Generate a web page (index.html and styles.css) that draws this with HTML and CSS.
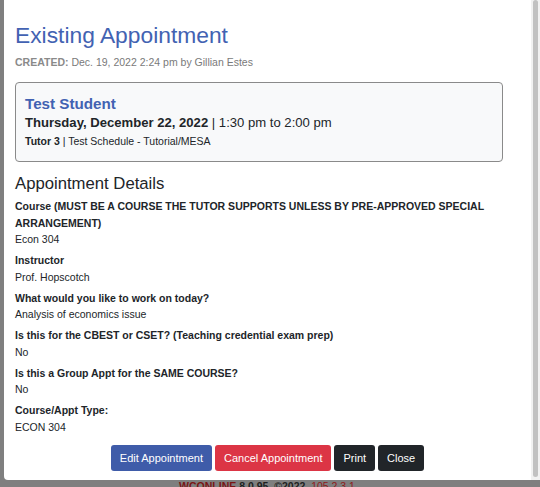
FILE: index.html
```html
<!DOCTYPE html>
<html>
  <head>
    <meta charset="utf-8">
    <title>Existing Appointment</title>
    <link rel="stylesheet" href="styles.css">
  </head>
  <body>
    <div class="modal">
      <div class="modal-body">
        <h1 class="title">Existing Appointment</h1>
        <p class="created"><b>CREATED:</b> Dec. 19, 2022 2:24 pm by Gillian Estes</p>

        <div class="summary">
          <div class="student">Test Student</div>
          <div class="when"><b>Thursday, December 22, 2022</b> | 1:30 pm to 2:00 pm</div>
          <div class="where"><b>Tutor 3</b> | Test Schedule - Tutorial/MESA</div>
        </div>

        <h2 class="details-title">Appointment Details</h2>
        <div class="field">
          <div class="label">Course (MUST BE A COURSE THE TUTOR SUPPORTS UNLESS BY PRE-APPROVED SPECIAL ARRANGEMENT)</div>
          <div class="value">Econ 304</div>
        </div>
        <div class="field">
          <div class="label">Instructor</div>
          <div class="value">Prof. Hopscotch</div>
        </div>
        <div class="field">
          <div class="label">What would you like to work on today?</div>
          <div class="value">Analysis of economics issue</div>
        </div>
        <div class="field">
          <div class="label">Is this for the CBEST or CSET? (Teaching credential exam prep)</div>
          <div class="value">No</div>
        </div>
        <div class="field">
          <div class="label">Is this a Group Appt for the SAME COURSE?</div>
          <div class="value">No</div>
        </div>
        <div class="field">
          <div class="label">Course/Appt Type:</div>
          <div class="value">ECON 304</div>
        </div>

        <div class="actions">
          <button class="btn btn-primary">Edit Appointment</button>
          <button class="btn btn-danger">Cancel Appointment</button>
          <button class="btn btn-dark">Print</button>
          <button class="btn btn-dark">Close</button>
        </div>
      </div>
      <div class="scrollbar">
        <div class="thumb"></div>
      </div>
    </div>
    <div class="footer">
      <span class="brand">WCONLINE</span> <b>8.0.95.</b> &copy;2022. <span class="build">105 2.3.1.</span>
    </div>
  </body>
</html>
```

FILE: styles.css
```css
body {
  margin: 0;
  height: 487px;
  overflow: hidden;
  background: #7f7f7f;
  font-family: "Liberation Sans", Arial, sans-serif;
  color: #212529;
}

.modal {
  position: relative;
  z-index: 1;
  display: flex;
  margin-left: 4px;
  height: 480px;
  background: #fff;
  border-bottom-left-radius: 4px;
}

.modal-body {
  box-sizing: border-box;
  width: 527px;
  padding: 21px 28px 0 11px;
}

.title {
  margin: 0;
  font-size: 22.8px;
  line-height: 28px;
  font-weight: normal;
  color: #4262b2;
}

.created {
  margin: 6px 0 0;
  font-size: 10.5px;
  line-height: 14px;
  color: #7a7a7a;
}

.created b {
  color: #8a8a8a;
}

.summary {
  margin-top: 13px;
  padding: 12px 9px 10px;
  height: 56px;
  border: 1px solid #8a8a8a;
  border-radius: 4px;
  background: #f8f9fa;
}

.student {
  font-size: 15.2px;
  line-height: 18px;
  font-weight: bold;
  color: #4262b2;
}

.when {
  font-size: 13.1px;
  line-height: 20px;
}

.where {
  font-size: 10.5px;
  line-height: 16px;
}

.details-title {
  margin: 11px 0 3px;
  font-size: 16.7px;
  line-height: 22px;
  font-weight: normal;
}

.field {
  margin-bottom: 4.5px;
  font-size: 10.5px;
  line-height: 16.5px;
}

.label {
  font-weight: bold;
}

.actions {
  display: flex;
  justify-content: center;
  gap: 3px;
  margin: 10px -17px 0 0;
}

.btn {
  height: 26px;
  padding: 0 9px;
  border: 0;
  border-radius: 3px;
  font-family: "Liberation Sans", Arial, sans-serif;
  font-size: 11px;
  color: #fff;
}

.btn-primary {
  background: #3f5ca9;
}

.btn-danger {
  background: #dc3545;
}

.btn-dark {
  background: #212529;
}

.btn-dark:first-of-type {
  margin-left: 0;
}

.scrollbar {
  width: 9px;
  background: #f1f1f1;
}

.thumb {
  margin-left: 2px;
  width: 5px;
  height: 477px;
  border-radius: 3px;
  background: #c1c1c1;
}

.footer {
  margin-top: -1px;
  text-align: center;
  font-size: 10.5px;
  line-height: 14px;
  font-weight: bold;
  color: #1f1f1f;
  padding-right: 3px;
}

.brand {
  color: #7a1515;
}

.build {
  font-weight: normal;
  color: #8e1a1a;
}
```
